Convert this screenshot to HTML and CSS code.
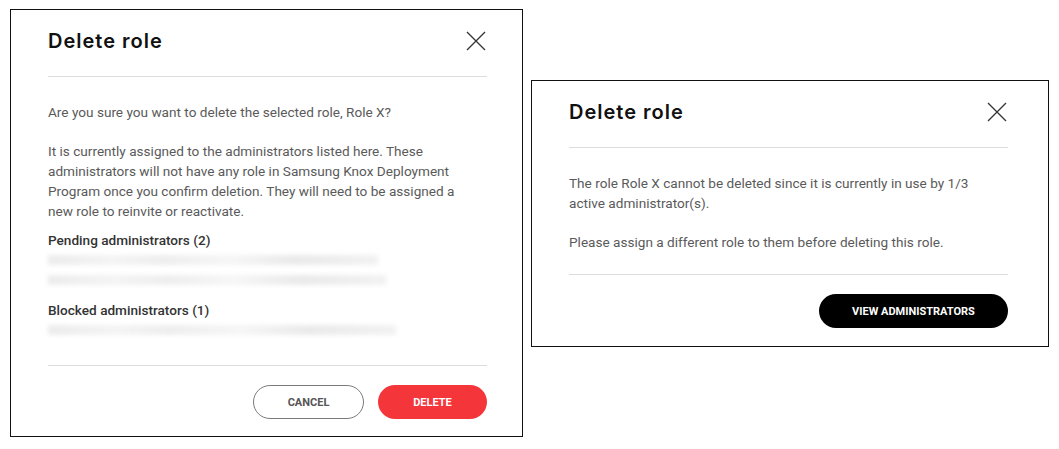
FILE: index.html
```html
<!DOCTYPE html>
<html lang="en">
<head>
  <meta charset="UTF-8" />
  <meta name="viewport" content="width=device-width, initial-scale=1.0"/>
  <title>Delete role</title>
  <link rel="stylesheet" href="styles.css">
</head>
<body>
  <div class="page">

    <div class="dialog dialog-confirm">
      <div class="dialog-header">
        <h2>Delete role</h2>
        <button class="close-btn" aria-label="Close">
          <svg width="20" height="20" viewBox="0 0 20 20"><path d="M1 1 L19 19 M19 1 L1 19" /></svg>
        </button>
      </div>
      <div class="dialog-body">
        <p>Are you sure you want to delete the selected role, Role X?</p>
        <p class="tight">It is currently assigned to the administrators listed here. These administrators will not have any role in Samsung Knox Deployment Program once you confirm deletion. They will need to be assigned a new role to reinvite or reactivate.</p>
        <h3>Pending administrators (2)</h3>
        <div class="blurred b1"></div>
        <div class="blurred b2"></div>
        <h3 class="spaced">Blocked administrators (1)</h3>
        <div class="blurred b3"></div>
      </div>
      <div class="dialog-footer">
        <button class="btn btn-outline">Cancel</button>
        <button class="btn btn-red">Delete</button>
      </div>
    </div>

    <div class="dialog dialog-blocked">
      <div class="dialog-header">
        <h2>Delete role</h2>
        <button class="close-btn" aria-label="Close">
          <svg width="20" height="20" viewBox="0 0 20 20"><path d="M1 1 L19 19 M19 1 L1 19" /></svg>
        </button>
      </div>
      <div class="dialog-body">
        <p>The role Role X cannot be deleted since it is currently in use by 1/3 active administrator(s).</p>
        <p class="last">Please assign a different role to them before deleting this role.</p>
      </div>
      <div class="dialog-footer">
        <button class="btn btn-black">View administrators</button>
      </div>
    </div>

  </div>
</body>
</html>
```

FILE: styles.css
```css
body {
  margin: 0;
  background: #fff;
  font-family: Roboto, 'Noto Sans', sans-serif;
}

.page {
  display: flex;
  align-items: flex-start;
  padding: 9px 0 0 10px;
  gap: 8px;
}

.dialog {
  border: 1px solid #111;
  background: #fff;
  padding: 0 35px 0 37px;
  box-sizing: border-box;
}

.dialog-confirm {
  width: 513px;
}

.dialog-blocked {
  width: 518px;
  margin-top: 71px;
  padding-right: 40px;
}

.dialog-header {
  display: flex;
  justify-content: space-between;
  align-items: center;
  padding: 19px 0 23px;
  border-bottom: 1px solid #dcdcdc;
}

.dialog-header h2 {
  margin: 0;
  font-family: Inter, sans-serif;
  font-weight: 600;
  font-size: 20px;
  line-height: 24px;
  color: #111;
  letter-spacing: 1px;
}

.close-btn {
  border: none;
  background: none;
  padding: 0;
  width: 20px;
  height: 20px;
  margin-right: 1px;
  cursor: pointer;
}

.close-btn svg path {
  stroke: #333;
  stroke-width: 1.3;
  fill: none;
}

.dialog-body {
  padding: 25px 0 25px;
  font-size: 13.6px;
  line-height: 20px;
  color: #5a5a5a;
}

.dialog-body p {
  margin: 0 0 19px;
  max-width: 420px;
}

.dialog-body p.tight {
  margin-bottom: 9px;
}

.dialog-body p.last {
  margin-bottom: 0;
}

.dialog-blocked .dialog-body {
  padding-bottom: 22px;
}

.dialog-body h3 {
  margin: 0;
  font-size: 13.6px;
  line-height: 20px;
  font-weight: 500;
  color: #333;
}

.dialog-body h3.spaced {
  margin-top: 10px;
}

.blurred {
  height: 20px;
  padding-top: 5px;
  box-sizing: border-box;
}

.blurred::before {
  content: '';
  display: block;
  height: 10px;
  background: linear-gradient(90deg, #ececec 0%, #f4f4f4 20%, #eeeeee 35%, #f6f6f6 55%, #eaeaea 75%, #f2f2f2 100%);
  filter: blur(2px);
}

.b1::before { width: 330px; }
.b2::before { width: 338px; }
.b3::before { width: 348px; }

.dialog-footer {
  display: flex;
  justify-content: flex-end;
  gap: 14px;
  border-top: 1px solid #dcdcdc;
  padding: 19px 0 17px;
}

.dialog-blocked .dialog-footer {
  padding-bottom: 18px;
}

.btn {
  height: 34px;
  border-radius: 17px;
  font-family: Roboto, sans-serif;
  font-size: 11px;
  font-weight: 700;
  text-transform: uppercase;
  cursor: pointer;
  box-sizing: border-box;
}

.btn-outline {
  width: 111px;
  background: #fff;
  border: 1px solid #7a7a7a;
  color: #555;
}

.btn-red {
  width: 109px;
  background: #f4363b;
  border: none;
  color: #fff;
}

.btn-black {
  width: 189px;
  background: #000;
  border: none;
  color: #fff;
}
```
